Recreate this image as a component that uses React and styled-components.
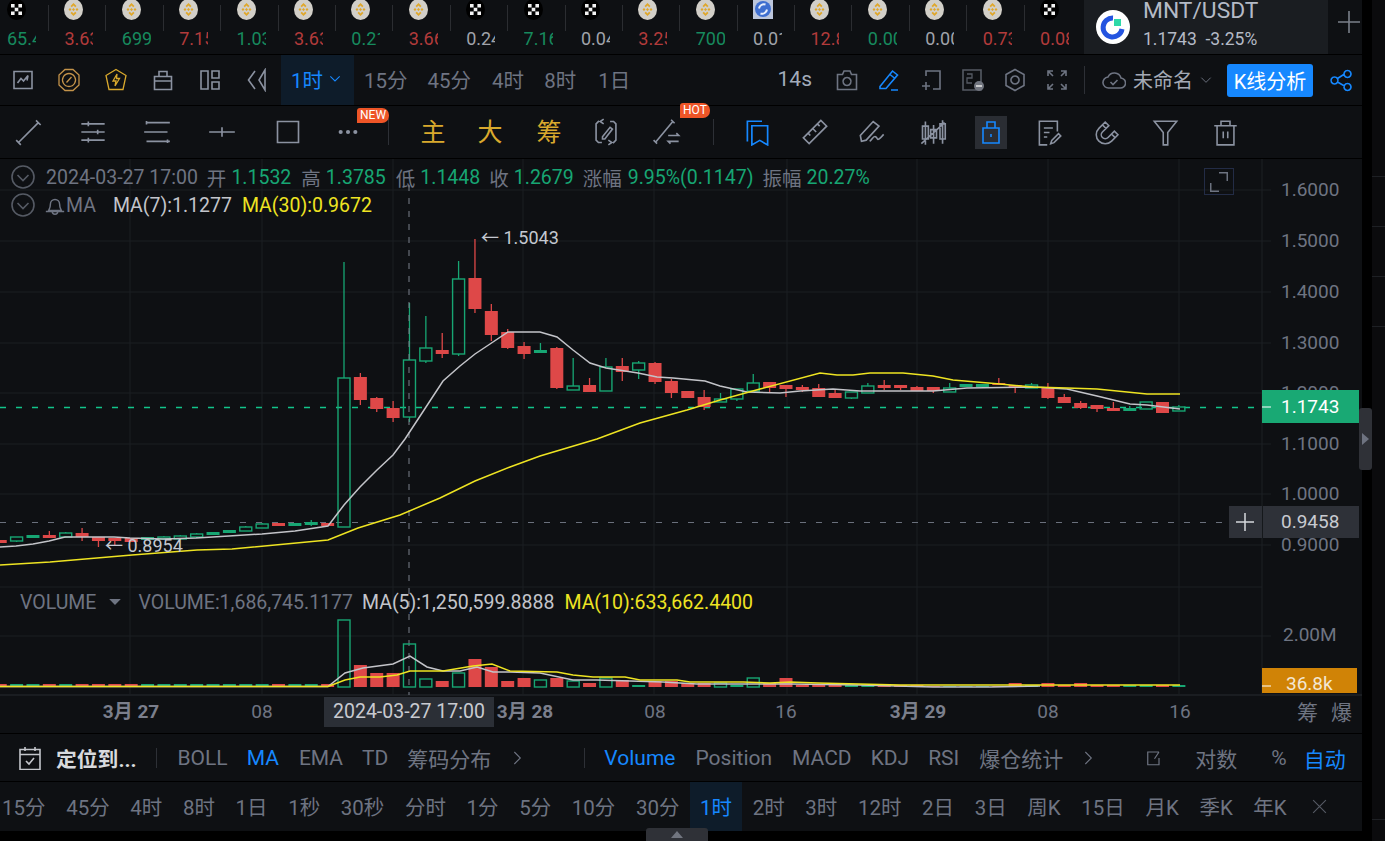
import React from "react";
import styled, { createGlobalStyle } from "styled-components";

const FONT = `Roboto, "Noto Sans CJK SC", "Noto Sans", sans-serif`;
const BG = "#0e1013";
const GREEN = "#17a673";
const RED = "#de4848";
const YELLOW = "#eee422";
const GREY = "#6e7482";
const BLUE = "#1688ff";
const GOLD = "#d9a92d";
const TICK_GREEN = "#178a5e";
const TICK_RED = "#b23b3b";
const TICK_GREY = "#a0a3aa";

const GlobalStyle = createGlobalStyle`
  html, body {
    margin: 0;
    padding: 0;
    background: #000;
    font-family: ${FONT};
  }
`;

const Page = styled.div`
  position: relative;
  display: flex;
  width: 1385px;
  height: 841px;
  overflow: hidden;
  background: #000;
`;

const Main = styled.div`
  display: flex;
  flex-direction: column;
  width: 1362px;
  height: 831px;
  background: ${BG};
`;

const Gutter = styled.div`
  display: flex;
  flex-direction: column;
  width: 13px;
  margin-left: 10px;
  height: 841px;
  padding: 176px 0 21px;
  box-sizing: border-box;
  background: #0b0b0d;
`;

const GutterLine = styled.div`
  height: 1px;
  margin-bottom: 49px;
  background: #1e2024;
  &:last-child {
    margin: auto 0 0;
  }
`;

const SideHandle = styled.div`
  position: absolute;
  left: 1359px;
  top: 408px;
  width: 13px;
  height: 62px;
  border-radius: 3px;
  background: #2f3137;
  display: flex;
  align-items: center;
  justify-content: center;
  &::after {
    content: "";
    border-left: 7px solid #6e7380;
    border-top: 6px solid transparent;
    border-bottom: 6px solid transparent;
  }
`;

const BottomHandle = styled.div`
  position: absolute;
  left: 646px;
  top: 828px;
  width: 62px;
  height: 13px;
  border-radius: 3px 3px 0 0;
  background: #2f3137;
  display: flex;
  align-items: center;
  justify-content: center;
  &::after {
    content: "";
    border-bottom: 7px solid #71757f;
    border-left: 6px solid transparent;
    border-right: 6px solid transparent;
  }
`;

/* ticker strip */
const TickerBar = styled.div`
  display: flex;
  height: 54px;
  flex: none;
  border-bottom: 1px solid #000;
`;

const TickerList = styled.div`
  display: flex;
  width: 1084px;
  overflow: hidden;
`;

const TickerCell = styled.div`
  display: flex;
  flex: 0 0 57.4px;
`;

const TickerBody = styled.div`
  width: 48px;
  padding-left: 7px;
  box-sizing: border-box;
`;

const TickerDivider = styled.div`
  width: 1px;
  height: 26px;
  margin-top: 5px;
  background: #2b2d31;
`;

const TickerValue = styled.div`
  width: 29px;
  overflow: hidden;
  white-space: nowrap;
  margin-top: 9px;
  font-size: 18px;
  line-height: 20px;
  color: ${(p) => p.$color};
`;

const CoinSvg = styled.svg`
  display: block;
  width: 20px;
  height: 21px;
  margin-top: -1px;
`;

const ActivePair = styled.div`
  display: flex;
  align-items: center;
  width: 244px;
  padding-left: 12px;
  box-sizing: border-box;
  background: #1a1d21;
`;

const PairText = styled.div`
  margin-left: 11px;
  color: #b4bac6;
`;

const PairName = styled.div`
  font-size: 22.8px;
  line-height: 24px;
  margin-top: -6px;
`;

const PairPrice = styled.div`
  font-size: 17.5px;
  line-height: 20px;
  margin-top: 6px;
  white-space: pre;
`;

const AddPair = styled.div`
  flex: 1;
  display: flex;
  align-items: center;
  justify-content: center;
  padding: 0 0 10px 8px;
`;

/* shared toolbar parts */
const ToolRow = styled.div`
  display: flex;
  align-items: center;
  flex: none;
  height: ${(p) => p.$h}px;
  border-bottom: 1px solid #000;
  box-sizing: content-box;
`;

const Slot = styled.div`
  position: relative;
  flex: 0 0 ${(p) => p.$w}px;
  height: 100%;
  display: flex;
  align-items: center;
  justify-content: center;
  box-sizing: border-box;
  padding-left: ${(p) => p.$pl || 0}px;
`;

const Icon = styled.svg`
  display: block;
  flex: none;
  width: ${(p) => p.$size || 24}px;
  height: ${(p) => p.$size || 24}px;
  fill: none;
  stroke: ${(p) => p.$color || "#8b92a1"};
  stroke-width: ${(p) => p.$stroke || 1.6};
  stroke-linecap: ${(p) => (p.$round ? "round" : "butt")};
  margin: ${(p) => p.$margin || 0};
`;

const ActivePeriod = styled.div`
  display: flex;
  align-items: center;
  gap: 4px;
  height: 100%;
  width: 73px;
  margin: 0 10px 0 1px;
  padding: 0 0 2px 10px;
  box-sizing: border-box;
  font-size: 20.5px;
  color: ${BLUE};
  background: #0e1c2a;
`;

const PeriodLink = styled.span`
  font-size: 20.5px;
  white-space: nowrap;
  color: ${GREY};
  margin: -2px ${(p) => p.$gap ?? 18}px 0 0;
`;

const RightTools = styled.div`
  display: flex;
  align-items: center;
  height: 100%;
  margin-left: auto;
`;

const Countdown = styled.span`
  font-size: 21px;
  color: #a3acbb;
  margin: -2px 14px 0 0;
`;

const VLine = styled.div`
  flex: none;
  width: 1px;
  height: ${(p) => p.$h || 26}px;
  margin: 0 ${(p) => p.$mr ?? 0}px 0 ${(p) => p.$ml ?? 0}px;
  background: #2d3036;
`;

const LayoutName = styled.span`
  font-size: 20px;
  color: #a3a9b5;
  margin: -2px 6px 0 7px;
`;

const AnalyseButton = styled.button`
  width: 86px;
  height: 33px;
  margin-left: 14px;
  padding: 0;
  border: 0;
  border-radius: 3px;
  background: ${BLUE};
  color: #fff;
  font: 20px ${FONT};
`;

const Badge = styled.span`
  position: absolute;
  z-index: 2;
  left: ${(p) => p.$left}px;
  top: ${(p) => p.$top}px;
  padding: 0 3px;
  height: 15px;
  line-height: 15px;
  border-radius: 3px 7px 7px 0;
  font-size: 12px;
  color: #fff;
  background: #ee5527;
`;

const GoldChar = styled.span`
  font-size: 25px;
  color: ${GOLD};
  margin-top: -4px;
`;

const ToolActive = styled.div`
  display: flex;
  align-items: center;
  justify-content: center;
  width: 32px;
  height: 33px;
  background: #2a2d33;
`;

/* chart */
const ChartWrap = styled.div`
  position: relative;
  flex: none;
  height: 574px;
  border-bottom: 1px solid #000;
`;

const ChartSvg = styled.svg`
  display: block;
`;

const AxisText = styled.text`
  font-family: ${FONT};
  font-size: ${(p) => p.$size || 19}px;
  font-weight: ${(p) => (p.$bold ? 700 : 400)};
  fill: ${(p) => p.$color || GREY};
`;

const Legend = styled.div`
  position: absolute;
  left: 0;
  top: ${(p) => p.$top}px;
  display: flex;
  align-items: center;
  height: 24px;
  padding-left: ${(p) => p.$pad || 11}px;
  font-size: 19.5px;
  white-space: pre;
  color: ${GREY};
`;

const LegendText = styled.span`
  color: ${(p) => p.$color || GREY};
  margin-left: ${(p) => p.$ml || 0}px;
`;

const ExpandBox = styled.div`
  position: absolute;
  left: 1204px;
  top: 9px;
  width: 28px;
  height: 25px;
  border: 1px solid #232c46;
  display: flex;
  align-items: center;
  justify-content: center;
`;

/* indicator and period rows */
const IndicatorLink = styled.span`
  font-size: 21px;
  white-space: nowrap;
  color: ${(p) => (p.$active ? BLUE : GREY)};
  margin-left: ${(p) => p.$ml || 0}px;
`;

const LocateText = styled.span`
  font-size: 20.8px;
  font-weight: 700;
  color: #d8dade;
  margin-right: 19px;
`;

const PeriodRow = styled.div`
  display: flex;
  align-items: center;
  flex: 1;
  padding-left: 2px;
  gap: 20.6px;
`;

const PeriodItem = styled.span`
  display: flex;
  align-items: center;
  align-self: stretch;
  padding-bottom: 2px;
  font-size: 20.5px;
  white-space: nowrap;
  color: ${(p) => (p.$active ? BLUE : GREY)};
  background: ${(p) => (p.$active ? "#0e1c2a" : "transparent")};
  padding-inline: ${(p) => (p.$active ? "10px" : "0")};
  margin: ${(p) => (p.$active ? "0 -10px" : "0")};
`;

const CloseMark = styled.span`
  display: flex;
  margin-left: 4px;
`;

/* ---- market data, in page pixels ---- */
const STEP = 16.37;
const candleX = (i) => 344 + STEP * i;

// [index, bodyTop, bodyBottom, wickTop, wickBottom, kind]
const CANDLES = [
  [-21, 540, 543, 540, 543, "r"], [-20, 537, 541, 537, 542, "h"], [-19, 535, 538, 535, 538, "g"],
  [-18, 535, 538, 531, 538, "r"], [-17, 533, 537, 532, 538, "h"], [-16, 533, 537, 528, 541, "r"],
  [-15, 537, 541, 537, 547, "r"], [-14, 538, 541, 538, 545, "r"], [-13, 538, 542, 538, 542, "r"],
  [-12, 537, 540, 537, 540, "g"], [-11, 537, 539, 536, 540, "h"], [-10, 536, 539, 535, 540, "h"],
  [-9, 534, 537, 533, 538, "h"], [-8, 532, 535, 532, 535, "g"], [-7, 530, 533, 530, 533, "g"],
  [-6, 527, 531, 526, 531, "h"], [-5, 524, 528, 523, 528, "h"], [-4, 523, 526, 523, 526, "r"],
  [-3, 523, 526, 523, 526, "g"], [-2, 522, 525, 520, 526, "g"], [-1, 523, 526, 523, 526, "r"],
  [0, 378, 527, 262, 527, "h"], [1, 377, 400, 373, 405, "r"], [2, 398, 409, 397, 412, "r"],
  [3, 408, 418, 401, 422, "r"], [4, 360, 417, 303, 422, "h"], [5, 348, 361, 316, 363, "h"],
  [6, 350, 354, 333, 358, "r"], [7, 279, 354, 261, 356, "h"], [8, 278, 309, 239, 313, "r"],
  [9, 311, 335, 304, 341, "r"], [10, 332, 348, 329, 349, "r"], [11, 346, 354, 342, 359, "r"],
  [12, 350, 353, 343, 353, "g"], [13, 348, 388, 347, 389, "r"], [14, 386, 390, 358, 390, "h"],
  [15, 385, 392, 378, 392, "r"], [16, 367, 391, 358, 391, "h"], [17, 366, 372, 358, 381, "r"],
  [18, 363, 370, 361, 379, "h"], [19, 363, 382, 362, 384, "r"], [20, 381, 393, 379, 398, "r"],
  [21, 391, 398, 391, 398, "r"], [22, 397, 407, 390, 410, "r"], [23, 399, 402, 393, 402, "h"],
  [24, 389, 399, 389, 401, "h"], [25, 383, 391, 374, 391, "h"], [26, 382, 388, 382, 392, "r"],
  [27, 385, 389, 385, 397, "r"], [28, 387, 390, 385, 392, "r"], [29, 388, 397, 384, 397, "r"],
  [30, 393, 398, 390, 398, "r"], [31, 392, 398, 392, 399, "h"], [32, 386, 393, 383, 393, "h"],
  [33, 385, 388, 380, 390, "r"], [34, 385, 388, 385, 390, "r"], [35, 387, 391, 386, 391, "r"],
  [36, 387, 391, 387, 393, "r"], [37, 388, 392, 383, 392, "h"], [38, 384, 387, 384, 387, "g"],
  [39, 384, 387, 384, 387, "g"], [40, 383, 385, 378, 385, "r"], [41, 385, 388, 385, 393, "r"],
  [42, 385, 388, 383, 388, "h"], [43, 388, 398, 383, 399, "r"], [44, 397, 403, 394, 403, "r"],
  [45, 403, 408, 401, 409, "r"], [46, 405, 409, 405, 412, "r"], [47, 408, 411, 402, 411, "r"],
  [48, 408, 411, 406, 411, "g"], [49, 402, 409, 402, 409, "h"], [50, 402, 413, 402, 413, "r"],
  [51, 407, 411, 405, 411, "h"],
];

// [index, barTop, kind]
const VOLUME = [
  [0, 620, "h"], [1, 665, "r"], [2, 673, "r"], [3, 673, "r"], [4, 644, "h"], [5, 679, "h"], [6, 681, "r"],
  [7, 673, "h"], [8, 659, "r"], [9, 667, "r"], [10, 681, "r"], [11, 678, "r"], [12, 680, "h"], [13, 678, "r"],
  [14, 681, "h"], [15, 683, "r"], [16, 678, "h"], [17, 680, "r"], [18, 685, "g"], [19, 681, "r"], [20, 681, "r"],
  [21, 683, "r"], [22, 683, "r"], [23, 683, "h"], [24, 685, "g"], [25, 678, "h"], [26, 683, "r"], [27, 678, "r"],
  [28, 685, "r"], [29, 685, "r"], [30, 685, "r"], [31, 685, "g"], [32, 685, "g"], [33, 685, "r"], [34, 685, "r"],
  [35, 685, "r"], [36, 686, "r"], [37, 686, "g"], [38, 686, "g"], [39, 686, "g"], [40, 686, "r"], [41, 683, "r"],
  [42, 685, "g"], [43, 683, "r"], [44, 685, "r"], [45, 683, "r"], [46, 685, "r"], [47, 685, "r"], [48, 685, "g"],
  [49, 685, "g"], [50, 685, "r"], [51, 685, "g"],
];

const MA7 = "0,547 16,546 33,544 49,541 65,537 98,537 114,537 130,538 163,539 196,538 229,536 262,534 295,531 328,526 344,505 360,487 377,470 393,455 405,439 426,407 443,381 460,366 475,354 490,344 508,332 540,332 557,337 573,350 590,363 606,368 638,373 657,377 673,378 705,381 720,386 747,392 780,393 800,391 833,389 860,391 933,391 967,388 1033,387 1067,389 1097,396 1130,404 1147,405 1180,409";
const MA30 = "0,565 50,562 132,555 197,550 232,549 328,540 358,528 400,515 440,498 475,481 510,467 540,456 597,439 640,423 687,410 720,400 760,389 820,373 837,375 853,375 870,373 903,373 933,376 953,380 1000,384 1033,387 1067,388 1097,389 1147,394 1180,394";
const VOL5 = "0,686.5 328,686.5 345,673 363,668 393,664 410,656 427,667 443,671 460,671 477,667 493,672 510,672 540,673 573,680 597,680 630,681 663,682 697,684 790,684 860,685 933,687 990,687 1040,686";
const VOL10 = "0,686.5 328,686.5 345,680 360,677 380,677 397,675 410,671 443,671 473,666 492,664 510,671 557,672 573,675 593,677 625,677 640,680 677,680 690,682 743,682 770,683 790,682 818,683 900,685 1180,685";

const PRICES = [
  ["1.6000", 190], ["1.5000", 241], ["1.4000", 292], ["1.3000", 343],
  ["1.2000", 393], ["1.1000", 444], ["1.0000", 494], ["0.9000", 545],
];
const V_GRID = [130, 262, 393, 523, 654, 787, 917, 1048, 1179];
const TIME_LABELS = [
  ["3月 27", 131, true], ["08", 262], ["3月 28", 525, true], ["08", 655],
  ["16", 786], ["3月 29", 918, true], ["08", 1048], ["16", 1180],
];

const COLOR = { r: RED, g: GREEN, h: GREEN };

const TICKERS = [
  ["okx", "65.43", TICK_GREEN], ["bnb", "3.632", TICK_RED], ["bnb", "699", TICK_GREEN], ["bnb", "7.153", TICK_RED],
  ["bnb", "1.032", TICK_GREEN], ["bnb", "3.632", TICK_RED], ["bnb", "0.217", TICK_GREEN], ["bnb", "3.665", TICK_RED],
  ["okx", "0.243", TICK_GREY], ["okx", "7.165", TICK_GREEN], ["okx", "0.04", TICK_GREY], ["bnb", "3.254", TICK_RED],
  ["bnb", "700", TICK_GREEN], ["sun", "0.012", TICK_GREY], ["bnb", "12.85", TICK_RED], ["bnb", "0.001", TICK_GREEN],
  ["bnb", "0.001", TICK_GREY], ["bnb", "0.732", TICK_RED], ["okx", "0.085", TICK_RED],
];

const Coin = ({ type }) => {
  if (type === "okx") {
    return (
      <CoinSvg viewBox="0 0 20 21">
        <ellipse cx="9.5" cy="10.5" rx="9.5" ry="10.5" fill="#000" />
        <path fill="#f2f2f2" d="M4 5h3.6v3.6H4zM11.4 5H15v3.6h-3.6zM7.7 8.7h3.6v3.6H7.7zM4 12.4h3.6V16H4zM11.4 12.4H15V16h-3.6z" />
      </CoinSvg>
    );
  }
  if (type === "sun") {
    return (
      <CoinSvg viewBox="0 0 20 21">
        <rect width="20" height="20" fill="#bcc6dc" />
        <circle cx="10" cy="10" r="8" fill="#3f6fd0" />
        <path fill="none" stroke="#e8eefb" strokeWidth="2" d="M12.5 5.5A5 5 0 0 0 6 9.5M7.5 14.5A5 5 0 0 0 14 10.5" />
      </CoinSvg>
    );
  }
  return (
    <CoinSvg viewBox="0 0 20 21">
      <ellipse cx="9.5" cy="10.5" rx="9.5" ry="10.5" fill="#d2cfc8" />
      <path fill="#dfa72a" d="M9.5 4l3 3-1.3 1.3-1.7-1.7-1.7 1.7L6.5 7zM4.5 10.5l1.5-1.5 1.5 1.5L6 12zM11.5 10.5l1.5-1.5 1.5 1.5-1.5 1.5zM9.5 9l1.5 1.5-1.5 1.5L8 10.5zM6.5 14l1.3-1.3 1.7 1.7 1.7-1.7L12.5 14l-3 3z" />
    </CoinSvg>
  );
};

const MantleLogo = () => (
  <svg width="36" height="36" viewBox="0 0 36 36">
    <circle cx="17" cy="18" r="17" fill="#fff" />
    <path d="M26 20a9.5 9.5 0 1 1-9-11" fill="none" stroke="#2454e0" strokeWidth="5" />
    <rect x="18" y="10" width="7" height="7" fill="#2fd9a8" />
  </svg>
);

const G = ({ d, color, size, stroke, round }) => (
  <Icon viewBox="0 0 24 24" $color={color} $size={size} $stroke={stroke} $round={round}>
    <path d={d} />
  </Icon>
);

const ICON = {
  chart: "M3 3.5h18v17H3zM6.5 15l3.5-4.5 2.5 2.5 4.5-5.5-1 5",
  gauge: "M8 1.5h8L22 7v10l-6 5.5H8L2 17V7zM12 5.5a6.5 6.5 0 1 0 .01 0M9.5 14.5l5-5.5",
  bolt: "M12 1.5l10 6-3 14H5L2 7.5zM13 6l-4 7h3l-1 5 4.5-7.5h-3z",
  box: "M3.5 8.5h17v13h-17zM8 8.5V3.5h8v5M3.5 13h17",
  panes: "M3 3h7v18H3zM14 3h7v7h-7zM14 14h7v7h-7z",
  rewind: "M10 3L3.5 12l6.5 9M20 2l-6 10 6 10z",
  camera: "M2.5 6.5h5L9 3h6l1.5 3.5h5v15h-19zM12 9.5a4 4 0 1 0 .01 0",
  pen: "M3 18.5L15.5 3l5 4L9 20.5H3zM13 6.5l5 4M14 22h7",
  crop: "M7 8V3h14v18h-7M3 18h8M7 14v8",
  hex: "M12 1.5l9 5v11l-9 5-9-5v-11zM12 8a4 4 0 1 0 .01 0",
  expand: "M3 8V3h5M3 3l5 5M16 3h5v5M21 3l-5 5M3 16v5h5M3 21l5-5M21 16v5h-5M21 21l-5-5",
  cloud: "M7 20a5.5 5.5 0 0 1-1-11A7 7 0 0 1 19 10a5 5 0 0 1-1 10zM8.5 14l2.5 2.5 4.5-4.5",
  share: "M18.5 2.5a3.5 3.5 0 1 0 .01 0M5.5 9a3.5 3.5 0 1 0 .01 0M18.5 15.5a3.5 3.5 0 1 0 .01 0M8.5 10.5l7-4.5M8.5 14l7 4",
  line: "M3 21L20 4M1 19l4 4M18 2l4 4",
  hlines: "M2 5h20M2 12h20M2 19h20M8 3v4M16 10v4M8 17v4",
  parallel: "M3 4h20M1 12h20M3 20h20M3 2.5v3M21 18.5v3",
  cross: "M1 12h22M12 8v8",
  rect: "M3 3h18v18H3z",
  sync: "M6 2.5L3.5 5v14l2 2h3M18 21.5l2.5-2.5V5l-2-2h-3M9 16l6.5-8 2 1.5L11 18H9zM10 1l-3 2 3 2M14 19l3 2-3 2",
  ruled: "M2 21L17 3M0.5 19l3 3M15.5 1.5l3 3M13 15h9l-2-2M22 20h-9l2 2",
  bookmark: "M3 20V2h13M7 6h14v17l-7-4-7 4z",
  ruler: "M2 17L17 2l5 5L7 22zM6 13l2 2M10 9l3 3M14 5l2 2",
  pencil: "M3 20l-1-5L13 3l5 4L7 19zM10 20c2-1 3-5 5-4s1 3 3 2 2-2 4-4",
  candles: "M3 7h5v11H3zM5.5 3v20M10 10h5v7h-5zM12.5 6v16M18 5h4.500v13H18zM20.200 2v20M2 22L22 4",
  bag: "M4 8h16v15H4zM8 8V2h8v6M12 14v3",
  note: "M19 11V2H3v21h7M7 8h8M7 12h5M7 16h3M13 22l1-3 6-6 2 2-6 6z",
  magnet: "M10 2.700L4.340 8.340A8 8 0 0 0 15.660 19.660L21.300 14L18.100 10.800L12.500 16.500A3.500 3.500 0 0 1 7.500 11.500L13.200 5.900ZM7.500 5.200L10.700 8.400M18.800 16.500L15.500 13.300",
  filter: "M2 2h20l-8 10v11h-4V12z",
  trash: "M2 6h20M8 6V2h8v4M4.5 6v17h15V6M10 11v6M14 11v6",
  calendar: "M2 3.5h20v20H2zM2 8.5h20M7 1v4M17 1v4M8 15l3 3 5-6",
  chevronR: "M8 3l9 9-9 9",
  close: "M3 3l18 18M21 3L3 21",
};

const RIGHT_ICONS = [
  ["camera", "#6e7482"], ["pen", BLUE], ["crop", "#6e7482"], null, ["hex", "#6e7482"], ["expand", "#6e7482"],
];

const DRAW_TOOLS = [
  ["line", 58], ["hlines", 70], ["parallel", 58], ["cross", 72], ["rect", 60],
];
const LOWER_TOOLS = [
  ["ruler", 58], ["pencil", 56], ["candles", 66],
];
const LAST_TOOLS = [["note", 66], ["magnet", 50], ["filter", 66], ["trash", 54]];

const PERIOD_LIST = ["15分", "45分", "4时", "8时", "1日", "1秒", "30秒", "分时", "1分", "5分", "10分", "30分", "1时", "2时", "3时", "12时", "2日", "3日", "周K", "15日", "月K", "季K", "年K"];

const Candle = ({ c }) => {
  const [i, top, bottom, wickTop, wickBottom, kind] = c;
  const x = candleX(i);
  const color = COLOR[kind];
  return (
    <g>
      {wickTop < top && <line x1={x} x2={x} y1={wickTop} y2={top} stroke={color} strokeWidth="1.3" />}
      {wickBottom > bottom && <line x1={x} x2={x} y1={bottom} y2={wickBottom} stroke={color} strokeWidth="1.3" />}
      {kind === "h" ? (
        <rect x={x - 6} y={top} width="12" height={bottom - top} fill="none" stroke={color} strokeWidth="1.4" />
      ) : (
        <rect x={x - 6.5} y={top} width="13" height={bottom - top} fill={color} />
      )}
    </g>
  );
};

const VolumeBar = ({ b }) => {
  const [i, top, kind] = b;
  const x = candleX(i);
  const color = COLOR[kind];
  if (kind === "h") {
    return <rect x={x - 6} y={top} width="12" height={687 - top} fill="none" stroke={color} strokeWidth="1.4" />;
  }
  return <rect x={x - 6.5} y={top} width="13" height={687 - top} fill={color} />;
};

const Chart = () => (
  <ChartSvg width="1362" height="574" viewBox="0 159 1362 574">
    {PRICES.map(([, y]) => (
      <line key={y} x1="0" x2="1271" y1={y} y2={y} stroke="#1b1e22" />
    ))}
    <line x1="0" x2="1271" y1="636" y2="636" stroke="#1b1e22" />
    <line x1="0" x2="1262" y1="587" y2="587" stroke="#1b1e22" />
    {V_GRID.map((x) => (
      <line key={x} x1={x} x2={x} y1="159" y2="694" stroke="#1b1e22" />
    ))}
    <line x1="1262" x2="1262" y1="159" y2="695" stroke="#1d2024" />
    <line x1="0" x2="1362" y1="695" y2="695" stroke="#1a1d21" strokeWidth="2" />

    {PRICES.map(([label, y]) => (
      <AxisText key={label} x="1281" y={y + 6}>{label}</AxisText>
    ))}
    <AxisText x="1283" y="641">2.00M</AxisText>

    <line x1="0" x2="1262" y1="407.5" y2="407.5" stroke="#12c48a" strokeWidth="1.4" strokeDasharray="6 10" />
    <line x1="0" x2="1229" y1="522.5" y2="522.5" stroke="#6a707c" strokeDasharray="6 10" />

    {CANDLES.map((c) => <Candle key={c[0]} c={c} />)}
    <line x1="409" x2="409" y1="185" y2="695" stroke="#7a808c" strokeDasharray="6 7" />
    {CANDLES.filter((c) => c[0] < 0).map((c) => (
      <rect key={c[0]} x={candleX(c[0]) - 6.5} y="684" width="13" height="3" fill={COLOR[c[5]]} />
    ))}
    {VOLUME.map((b) => <VolumeBar key={b[0]} b={b} />)}

    <polyline points={MA7} fill="none" stroke="#c3c4c9" strokeWidth="1.5" />
    <polyline points={MA30} fill="none" stroke={YELLOW} strokeWidth="1.5" />
    <polyline points={VOL5} fill="none" stroke="#c3c4c9" strokeWidth="1.5" />
    <polyline points={VOL10} fill="none" stroke={YELLOW} strokeWidth="1.5" />

    <AxisText x="481" y="244" $size={18} $color="#c4c8d0">← 1.5043</AxisText>
    <AxisText x="105" y="552" $size={18} $color="#c4c8d0">← 0.8954</AxisText>

    <rect x="1262" y="390" width="97" height="33" fill="#19a974" />
    <line x1="1262" x2="1271" y1="407" y2="407" stroke="#fff" />
    <AxisText x="1281" y="413" $color="#fff">1.1743</AxisText>

    <rect x="1229" y="506" width="33" height="32" fill="#2e3138" />
    <path d="M1245 513v18M1236 522h18" stroke="#d5d7dc" strokeWidth="1.5" />
    <rect x="1263" y="506" width="96" height="32" fill="#2e3138" />
    <AxisText x="1281" y="528" $color="#c8cad0">0.9458</AxisText>

    <rect x="1262" y="668" width="95" height="25" fill="#d08306" />
    <line x1="1262" x2="1271" y1="686" y2="686" stroke="#fff" />
    <AxisText x="1286" y="690" $color="#f3e7d2">36.8k</AxisText>

    {TIME_LABELS.map(([label, x, bold]) => (
      <AxisText key={label + x} x={x} y="718" textAnchor="middle" $size={19} $bold={bold} $color={bold ? "#7b7f8c" : GREY}>{label}</AxisText>
    ))}
    <rect x="324" y="697" width="170" height="30" fill="#2b2f36" />
    <AxisText x="333" y="718" $size={19.5} $color="#c8cad0">2024-03-27 17:00</AxisText>
    <AxisText x="1297" y="720" $size={21}>筹</AxisText>
    <AxisText x="1331" y="720" $size={21}>爆</AxisText>
  </ChartSvg>
);

const CircleChevron = () => (
  <Icon viewBox="0 0 24 24" $size={24} $color="#555a64">
    <circle cx="12" cy="12" r="11" />
    <path d="M6.5 10l5.5 5.5 5.5-5.5" />
  </Icon>
);

export default function App() {
  return (
    <Page>
      <GlobalStyle />
      <Main>
        <TickerBar>
          <TickerList>
            {TICKERS.map(([coin, value, color], i) => (
              <TickerCell key={i}>
                <TickerBody>
                  <Coin type={coin} />
                  <TickerValue $color={color}>{value}</TickerValue>
                </TickerBody>
                {i < TICKERS.length - 1 && <TickerDivider />}
              </TickerCell>
            ))}
          </TickerList>
          <ActivePair>
            <MantleLogo />
            <PairText>
              <PairName>MNT/USDT</PairName>
              <PairPrice>1.1743  -3.25%</PairPrice>
            </PairText>
          </ActivePair>
          <AddPair>
            <G d="M12 1v22M1 12h22" color="#7b808b" size={24} />
          </AddPair>
        </TickerBar>

        <ToolRow $h={50}>
          <Slot $w={45}><G d={ICON.chart} /></Slot>
          <Slot $w={47}><G d={ICON.gauge} color="#c4934a" stroke={1.3} /></Slot>
          <Slot $w={47}><G d={ICON.bolt} color={GOLD} stroke={1.3} /></Slot>
          <Slot $w={47}><G d={ICON.box} /></Slot>
          <Slot $w={47}><G d={ICON.panes} /></Slot>
          <Slot $w={47}><G d={ICON.rewind} /></Slot>
          <ActivePeriod>
            1时
            <G d="M5 8l7 7 7-7" color={BLUE} size={16} />
          </ActivePeriod>
          <PeriodLink $gap={20}>15分</PeriodLink>
          <PeriodLink $gap={21}>45分</PeriodLink>
          <PeriodLink $gap={20}>4时</PeriodLink>
          <PeriodLink $gap={22}>8时</PeriodLink>
          <PeriodLink>1日</PeriodLink>
          <RightTools>
            <Countdown>14s</Countdown>
            {RIGHT_ICONS.map((item, i) =>
              item ? (
                <Slot key={i} $w={42}><G d={ICON[item[0]]} color={item[1]} /></Slot>
              ) : (
                <Slot key={i} $w={42}>
                  <Icon viewBox="0 0 24 24" $color="#555a64">
                    <path d="M2 2h18v20H2z" />
                    <circle cx="18" cy="18" r="5" fill="#71757f" stroke="none" />
                    <path d="M15 18h6" stroke="#e0e0e0" />
                    <path d="M6 6h5v4H6v5h5" strokeWidth="1.3" />
                  </Icon>
                </Slot>
              )
            )}
            <VLine $ml={6} $mr={17} $h={28} />
            <Slot $w={24}><G d={ICON.cloud} color="#6e7482" /></Slot>
            <LayoutName>未命名</LayoutName>
            <G d="M4 8l8 8 8-8" color="#6e7482" size={14} />
            <AnalyseButton>K线分析</AnalyseButton>
            <Slot $w={49} $pl={7}>
              <G d={ICON.share} color={BLUE} />
            </Slot>
          </RightTools>
        </ToolRow>

        <ToolRow $h={52}>
          {DRAW_TOOLS.map(([name, w]) => (
            <Slot key={name} $w={w}><G d={ICON[name]} size={28} stroke={1.4} /></Slot>
          ))}
          <Slot $w={60}>
            <G d="M4 12h.01M12 12h.01M20 12h.01" size={22} stroke={4.5} round />
            <Badge $left={39} $top={2}>NEW</Badge>
          </Slot>
          <VLine $ml={10} $mr={14} />
          <Slot $w={60}><GoldChar>主</GoldChar></Slot>
          <Slot $w={54}><GoldChar>大</GoldChar></Slot>
          <Slot $w={64}><GoldChar>筹</GoldChar></Slot>
          <Slot $w={50}><G d={ICON.sync} size={28} stroke={1.4} /></Slot>
          <Slot $w={72}>
            <G d={ICON.ruled} size={28} stroke={1.4} />
            <Badge $left={49} $top={-3}>HOT</Badge>
          </Slot>
          <VLine $ml={10} $mr={14} />
          <Slot $w={58}><G d={ICON.bookmark} color={BLUE} size={27} stroke={1.5} /></Slot>
          {LOWER_TOOLS.map(([name, w]) => (
            <Slot key={name} $w={w}><G d={ICON[name]} size={28} stroke={1.4} /></Slot>
          ))}
          <Slot $w={50}>
            <ToolActive><G d={ICON.bag} color={BLUE} /></ToolActive>
          </Slot>
          {LAST_TOOLS.map(([name, w]) => (
            <Slot key={name} $w={w}><G d={ICON[name]} size={27} stroke={1.4} /></Slot>
          ))}
        </ToolRow>

        <ChartWrap>
          <Chart />
          <Legend $top={6}>
            <CircleChevron />
            <LegendText $ml={11}>2024-03-27 17:00</LegendText>
            <LegendText $ml={9}>开</LegendText>
            <LegendText $ml={5} $color={GREEN}>1.1532</LegendText>
            <LegendText $ml={10}>高</LegendText>
            <LegendText $ml={5} $color={GREEN}>1.3785</LegendText>
            <LegendText $ml={10}>低</LegendText>
            <LegendText $ml={5} $color={GREEN}>1.1448</LegendText>
            <LegendText $ml={9}>收</LegendText>
            <LegendText $ml={5} $color={GREEN}>1.2679</LegendText>
            <LegendText $ml={9}>涨幅</LegendText>
            <LegendText $ml={6} $color={GREEN}>9.95%(0.1147)</LegendText>
            <LegendText $ml={9}>振幅</LegendText>
            <LegendText $ml={5} $color={GREEN}>20.27%</LegendText>
          </Legend>
          <Legend $top={34}>
            <CircleChevron />
            <Icon viewBox="0 0 24 24" $size={22} $color="#6e7482" $margin="0 0 0 9px">
              <path d="M5 18c1-2 2-3 2-7a5 5 0 0 1 10 0c0 4 1 5 2 7zM2 19h20M9 19a3 3 0 0 0 6 0" />
            </Icon>
            <LegendText>MA</LegendText>
            <LegendText $ml={17} $color="#c3c5cb">MA(7):1.1277</LegendText>
            <LegendText $ml={10} $color={YELLOW}>MA(30):0.9672</LegendText>
          </Legend>
          <Legend $top={431} $pad={20}>
            <LegendText>VOLUME</LegendText>
            <Icon viewBox="0 0 24 24" $size={14} $color="none" $margin="0 16px 0 12px">
              <path d="M2 7h20L12 17z" fill="#6e7482" />
            </Icon>
            <LegendText>VOLUME:1,686,745.1177</LegendText>
            <LegendText $ml={9} $color="#c3c5cb">MA(5):1,250,599.8888</LegendText>
            <LegendText $ml={10} $color={YELLOW}>MA(10):633,662.4400</LegendText>
          </Legend>
          <ExpandBox>
            <G d="M12 2h9v9M12 22H3v-9" color="#6e7482" size={22} />
          </ExpandBox>
        </ChartWrap>

        <ToolRow $h={47}>
          <Slot $w={56} $pl={4}>
            <G d={ICON.calendar} color="#c4c6cc" />
          </Slot>
          <LocateText>定位到...</LocateText>
          <VLine $h={20} />
          <IndicatorLink $ml={21}>BOLL</IndicatorLink>
          <IndicatorLink $ml={19} $active>MA</IndicatorLink>
          <IndicatorLink $ml={20}>EMA</IndicatorLink>
          <IndicatorLink $ml={19}>TD</IndicatorLink>
          <IndicatorLink $ml={19}>筹码分布</IndicatorLink>
          <Slot $w={52}><G d={ICON.chevronR} color="#6e7482" size={16} /></Slot>
          <VLine $ml={41} $h={20} />
          <IndicatorLink $ml={19} $active>Volume</IndicatorLink>
          <IndicatorLink $ml={20}>Position</IndicatorLink>
          <IndicatorLink $ml={20}>MACD</IndicatorLink>
          <IndicatorLink $ml={19}>KDJ</IndicatorLink>
          <IndicatorLink $ml={19}>RSI</IndicatorLink>
          <IndicatorLink $ml={20}>爆仓统计</IndicatorLink>
          <Slot $w={50}><G d={ICON.chevronR} color="#6e7482" size={16} /></Slot>
          <Slot $w={80}><G d="M20 4h-15v17h15v-9M20 4l-6 9" color="#6e7482" size={18} /></Slot>
          <IndicatorLink $ml={2}>对数</IndicatorLink>
          <IndicatorLink $ml={34}>%</IndicatorLink>
          <IndicatorLink $ml={17} $active>自动</IndicatorLink>
        </ToolRow>

        <PeriodRow>
          {PERIOD_LIST.map((p) => (
            <PeriodItem key={p} $active={p === "1时"}>{p}</PeriodItem>
          ))}
          <CloseMark><G d={ICON.close} color="#555a64" size={17} /></CloseMark>
        </PeriodRow>
      </Main>
      <Gutter>
        <GutterLine />
        <GutterLine />
        <GutterLine />
        <GutterLine />
        <GutterLine />
      </Gutter>
      <SideHandle />
      <BottomHandle />
    </Page>
  );
}
